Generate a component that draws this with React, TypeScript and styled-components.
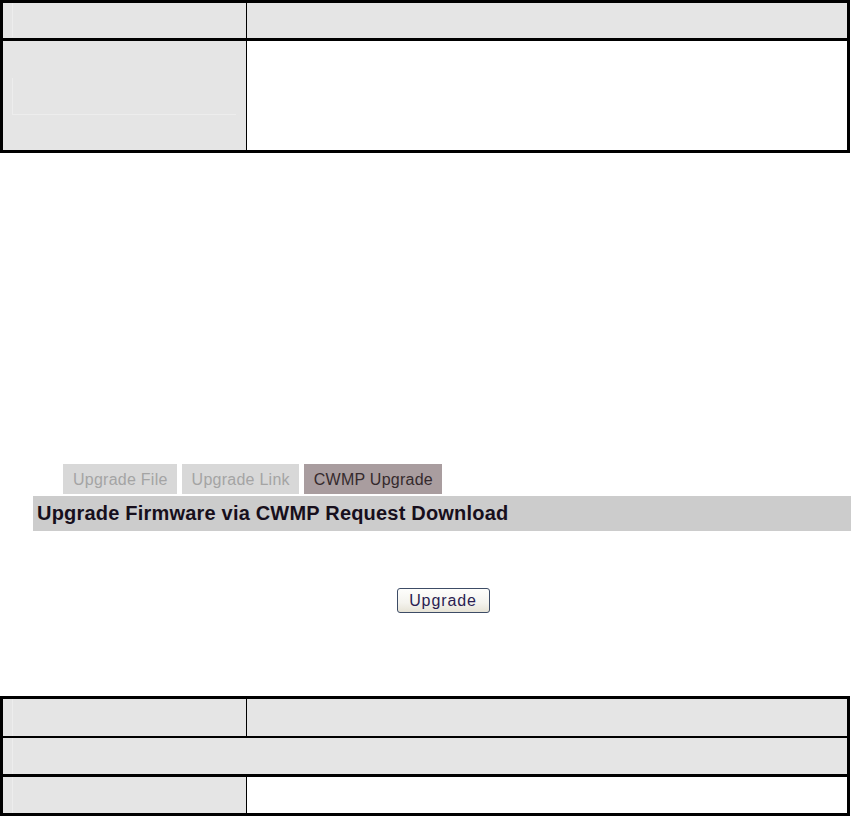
import React from 'react'
import styled, { createGlobalStyle } from 'styled-components'

const GlobalStyle = createGlobalStyle`
  html, body {
    margin: 0;
    padding: 0;
    background: #ffffff;
  }
  body {
    font-family: 'Liberation Sans', Arial, sans-serif;
  }
`

const Page = styled.div`
  width: 858px;
  height: 817px;
  overflow: hidden;
  display: flex;
  flex-direction: column;
`

const Table = styled.div<{ mt?: number }>`
  width: 850px;
  box-sizing: border-box;
  border: 3px solid #000;
  margin-top: ${({ mt }) => mt || 0}px;
  display: flex;
  flex-direction: column;
`

const Row = styled.div<{ h: number; sep?: number }>`
  display: flex;
  height: ${({ h }) => h}px;
  border-top: ${({ sep }) => (sep ? `${sep}px solid #000` : 'none')};
`

const Cell = styled.div<{ shade?: boolean; wide?: boolean }>`
  position: relative;
  box-sizing: border-box;
  width: ${({ wide }) => (wide ? '100%' : '244px')};
  border-right: ${({ wide }) => (wide ? 'none' : '1px solid #000')};
  background: ${({ shade }) => (shade ? '#e5e5e5' : '#ffffff')};

  &:last-child {
    flex: 1;
    width: auto;
    border-right: none;
  }
`

// faint scan marks left in the grey cells
const Ghost = styled.div<{ top: number; h: number; w?: number }>`
  position: absolute;
  left: 9px;
  top: ${({ top }) => top}px;
  height: ${({ h }) => h}px;
  width: ${({ w }) => w || 0}px;
  border-left: 1px solid #ededed;
  border-bottom: ${({ w }) => (w ? '1px solid #ededed' : 'none')};
`

const Section = styled.div`
  margin-top: 311px;
  margin-left: 33px;
  width: 818px;
  display: flex;
  flex-direction: column;
`

const Tabs = styled.div`
  display: flex;
  gap: 5px;
  margin-left: 30px;
  height: 30px;
`

const Tab = styled.div<{ active?: boolean }>`
  display: flex;
  align-items: center;
  padding: 1px 9px 0 10px;
  font-size: 16px;
  letter-spacing: 0.25px;
  background: ${({ active }) => (active ? '#a99d9f' : '#d8d8d8')};
  color: ${({ active }) => (active ? '#352a2d' : '#a4a4a4')};
`

const Heading = styled.div`
  margin-top: 2px;
  height: 35px;
  background: #cccccc;
  display: flex;
  align-items: center;
  padding-left: 4px;
  font-size: 20px;
  font-weight: bold;
  letter-spacing: 0.2px;
  color: #170f1c;
`

const Actions = styled.div`
  display: flex;
  justify-content: center;
  margin-top: 57px;
  padding-left: 2px;
`

const Button = styled.button`
  width: 93px;
  height: 25px;
  box-sizing: border-box;
  border: 1px solid #3d4c66;
  border-radius: 3px;
  background: linear-gradient(180deg, #fefefc 0%, #f4f3ee 60%, #e6e3d6 100%);
  font-family: 'Liberation Sans', Arial, sans-serif;
  font-size: 16px;
  letter-spacing: 0.9px;
  color: #2a1d52;
  padding: 0;
`

export default function App() {
  return (
    <Page>
      <GlobalStyle />
      <Table>
        <Row h={35}>
          <Cell shade>
            <Ghost top={0} h={34} />
          </Cell>
          <Cell shade />
        </Row>
        <Row h={109} sep={3}>
          <Cell shade>
            <Ghost top={37} h={36} w={223} />
          </Cell>
          <Cell />
        </Row>
      </Table>

      <Section>
        <Tabs>
          <Tab>Upgrade File</Tab>
          <Tab>Upgrade Link</Tab>
          <Tab active>CWMP Upgrade</Tab>
        </Tabs>
        <Heading>Upgrade Firmware via CWMP Request Download</Heading>
        <Actions>
          <Button>Upgrade</Button>
        </Actions>
      </Section>

      <Table mt={83}>
        <Row h={37}>
          <Cell shade>
            <Ghost top={0} h={37} />
          </Cell>
          <Cell shade />
        </Row>
        <Row h={36} sep={2}>
          <Cell shade wide>
            <Ghost top={0} h={36} />
          </Cell>
        </Row>
        <Row h={36} sep={3}>
          <Cell shade>
            <Ghost top={0} h={36} />
          </Cell>
          <Cell />
        </Row>
      </Table>
    </Page>
  )
}
